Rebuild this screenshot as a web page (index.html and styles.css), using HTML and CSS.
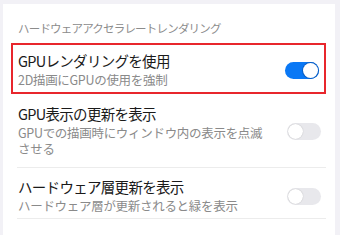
FILE: index.html
```html
<!DOCTYPE html>
<html lang="ja">
	<head>
		<meta charset="UTF-8" />
		<meta name="viewport" content="width=device-width, initial-scale=1.0" />
		<title>ハードウェアアクセラレートレンダリング</title>
		<link rel="stylesheet" href="styles.css">
	</head>
	<body>
		<div class="card">
			<div class="section-title">ハードウェアアクセラレートレンダリング</div>
			<div class="setting-item highlight">
				<div class="setting-text">
					<div class="setting-name">GPUレンダリングを使用</div>
					<div class="setting-desc">2D描画にGPUの使用を強制</div>
				</div>
				<span class="switch on"></span>
			</div>
			<div class="setting-item">
				<div class="setting-text">
					<div class="setting-name">GPU表示の更新を表示</div>
					<div class="setting-desc">GPUでの描画時にウィンドウ内の表示を点滅させる</div>
				</div>
				<span class="switch"></span>
			</div>
			<div class="setting-item divided">
				<div class="setting-text">
					<div class="setting-name">ハードウェア層更新を表示</div>
					<div class="setting-desc">ハードウェア層が更新されると緑を表示</div>
				</div>
				<span class="switch"></span>
			</div>
		</div>
	</body>
</html>
```

FILE: styles.css
```css
* {
	padding: 0;
	margin: 0;
	box-sizing: border-box;
}
body {
	background-color: #f2f1f6;
	font-family: "Noto Sans CJK JP", "Noto Sans", sans-serif;
	width: 340px;
	height: 235px;
	overflow: hidden;
}
.card {
	background-color: #fff;
	margin: 4px 5px 0 3px;
	height: 231px;
	padding: 0 9px 0 8px;
}
.section-title {
	color: #8c8c8c;
	font-size: 11.5px;
	line-height: 18px;
	padding: 15px 0 6px 7px;
	letter-spacing: -0.8px;
	white-space: nowrap;
}
.setting-item {
	display: flex;
	align-items: center;
	margin: 0 0 0 6px;
	padding: 11px 5px 10px 1px;
}
.setting-item.highlight {
	margin: 0;
	border: 2px solid #e8262c;
	padding: 7px 5px 4px 5px;
}
.setting-item.divided {
	border-top: 1px solid #ececec;
	border-bottom: 1px solid #ececec;
	padding: 10px 5px 4px 1px;
}
.setting-text {
	flex: 1;
	min-width: 0;
}
.setting-name {
	color: #1a1a1a;
	font-size: 14.5px;
	line-height: 18px;
	letter-spacing: -0.7px;
	white-space: nowrap;
}
.setting-desc {
	color: #8a8a8a;
	font-size: 12.5px;
	line-height: 16px;
	margin-top: 2px;
	letter-spacing: -0.3px;
	padding-right: 17px;
}
.switch {
	position: relative;
	flex: none;
	width: 34px;
	height: 17px;
	border-radius: 9px;
	background-color: #e8e8ec;
}
.switch:after {
	content: "";
	position: absolute;
	top: 1px;
	left: 1px;
	width: 15px;
	height: 15px;
	border-radius: 50%;
	background-color: #fff;
	box-shadow: 0 0 1px rgba(0, 0, 0, 0.3);
}
.switch.on {
	background-color: #0a78f5;
}
.switch.on:after {
	left: 18px;
	box-shadow: 0 0 0 1px #0a5ec4;
}
```
